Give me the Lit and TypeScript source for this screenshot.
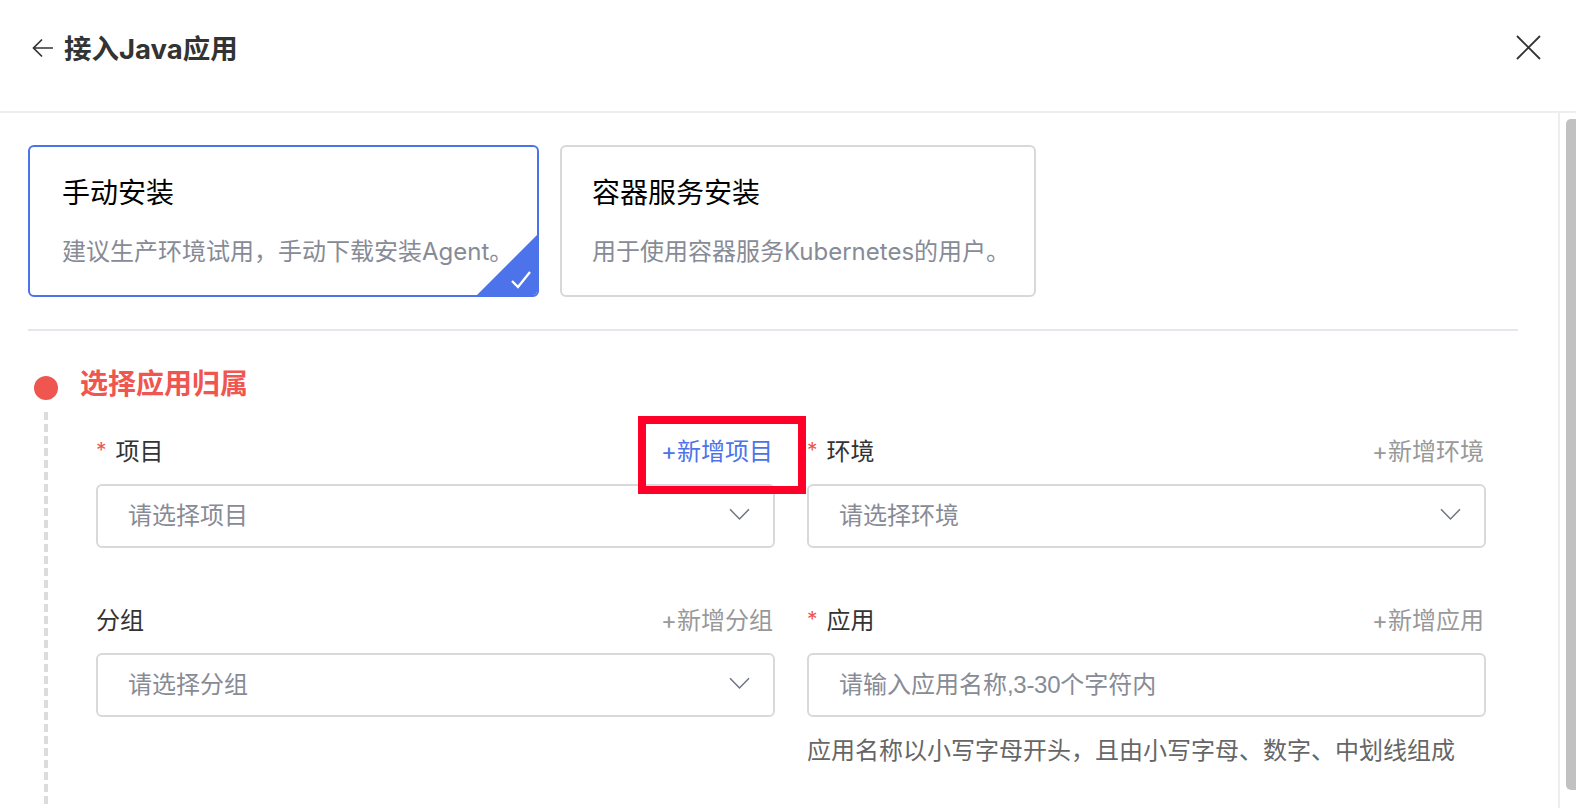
import { LitElement, html, css } from "lit";
import { customElement } from "lit/decorators.js";

const chevron = html`<svg class="chev" width="21" height="13" viewBox="0 0 21 13" fill="none"><path d="M1 1.2 10.5 11 20 1.2" stroke="#6f7480" stroke-width="1.5"/></svg>`;

@customElement("app-root")
export class AppRoot extends LitElement {
  static styles = css`
    :host { display: block; width: 1576px; height: 808px; overflow: hidden; background: #fff; position: relative;
      font-family: Inter, "Noto Sans CJK SC", sans-serif; font-size: 24px; color: #333; }
    .header { height: 96px; border-bottom: 2px solid #eeeef0; display: flex; align-items: center; padding: 0 35px 15px 32px; box-sizing: content-box; }
    .back { flex: none; display: block; margin-right: 11px; }
    .title { font-size: 27.5px; font-weight: 700; color: #333; line-height: 34px; flex: 1; position: relative; top: 1px; }
    .close { position: relative; top: -1px; }
    .body { display: flex; height: 695px; }
    .main { flex: 1; padding: 32px 40px 0 28px; min-width: 0; }
    .track { width: 16px; border-left: 2px solid #eeeef0; padding: 6px 0 18px; flex: none; display: flex; justify-content: flex-end; }
    .thumb { width: 10px; background: #c1c1c1; border-radius: 5px 0 0 5px; margin-left: 6px; flex: none; height: 671px; }
    .cards { display: flex; gap: 21px; }
    .card { height: 152px; box-sizing: border-box; border: 2px solid #d8d8da; border-radius: 6px; padding: 0 31px 0 30px; position: relative; overflow: hidden; }
    .card.a { width: 511px; border-color: #4c73ea; padding-left: 32px; }
    .card.b { width: 476px; }
    .card h3 { margin: 27px 0 0; font-size: 28px; font-weight: 400; line-height: 38px; color: #000; }
    .card p { margin: 20px 0 0; font-size: 24px; line-height: 40px; color: #878b96; white-space: nowrap; }
    .corner { position: absolute; right: -2px; bottom: -2px; display: block; }
    .divider { height: 2px; background: #e4e5ef; margin-top: 32px; }
    .heading { display: flex; align-items: center; margin-top: 39px; height: 32px; }
    .dot { width: 24px; height: 24px; border-radius: 50%; background: #f05650; margin-left: 6px; flex: none; position: relative; top: 2px; }
    .heading span { margin-left: 22px; font-size: 28px; font-weight: 700; line-height: 32px; color: #f05650; position: relative; top: -2.5px; }
    .timeline { display: flex; margin-top: 10px; }
    .line { width: 4px; height: 394px; margin-left: 16px; flex: none; background: repeating-linear-gradient(to bottom, #dcdcdc 0 8px, transparent 8px 12px); }
    .form { flex: 1; padding: 20px 32px 0 48px; display: grid; grid-template-columns: 679px 679px; column-gap: 32px; row-gap: 53px; align-content: start; }
    .labelrow { display: flex; align-items: center; justify-content: space-between; height: 40px; margin-bottom: 12px; }
    .label { display: flex; align-items: center; line-height: 40px; }
    .req { color: #f05650; font-size: 21px; width: 19.5px; position: relative; top: -1px; }
    .add { color: #999; line-height: 40px; margin-right: 2px; }
    .add.on { color: #4c73ea; }
    .input { height: 64px; box-sizing: border-box; border: 2px solid #d9d9db; border-radius: 6px; padding: 0 23px 0 30px; display: flex; align-items: center; justify-content: space-between; color: #878b96; }
    .input span { position: relative; top: -2.5px; }
    .input .chev { position: relative; top: -1.5px; }
    .help { margin-top: 14px; line-height: 40px; color: #666; white-space: nowrap; }
    .nums { font-family: "Liberation Sans", "Noto Sans CJK SC", sans-serif; letter-spacing: -0.3px; top: 0 !important; }
    .highlight { position: absolute; left: 638px; top: 416px; width: 168px; height: 78px; box-sizing: border-box; border: 8px solid #ff0029; }
  `;

  field(label: string, add: string, ph: unknown, req: boolean, on = false, select = true, help = "") {
    return html`<div class="field">
      <div class="labelrow">
        <div class="label">${req ? html`<span class="req">*</span>` : ""}${label}</div>
        <div class="add ${on ? "on" : ""}">${add}</div>
      </div>
      <div class="input"><span>${ph}</span>${select ? chevron : ""}</div>
      ${help ? html`<div class="help">${help}</div>` : ""}
    </div>`;
  }

  render() {
    return html`
      <div class="header">
        <svg class="back" width="21" height="20" viewBox="0 0 21 20" fill="none"><path d="M21 10H1.5M10 1.5 1.5 10l8.5 8.5" stroke="#333" stroke-width="1.7"/></svg>
        <div class="title">接入Java应用</div>
        <svg class="close" width="25" height="25" viewBox="0 0 25 25" fill="none"><path d="M1 1l23 23M24 1 1 24" stroke="#333" stroke-width="1.8"/></svg>
      </div>
      <div class="body">
        <div class="main">
          <div class="cards">
            <div class="card a">
              <h3>手动安装</h3>
              <p>建议生产环境试用，手动下载安装Agent。</p>
              <svg class="corner" width="64" height="64" viewBox="0 0 64 64"><path d="M64 0V64H0Z" fill="#4c73ea"/><path d="M37 48l6 6 12-15" fill="none" stroke="#fff" stroke-width="2.4"/></svg>
            </div>
            <div class="card b">
              <h3>容器服务安装</h3>
              <p>用于使用容器服务Kubernetes的用户。</p>
            </div>
          </div>
          <div class="divider"></div>
          <div class="heading"><div class="dot"></div><span>选择应用归属</span></div>
          <div class="timeline">
            <div class="line"></div>
            <div class="form">
              ${this.field("项目", "+新增项目", "请选择项目", true, true)}
              ${this.field("环境", "+新增环境", "请选择环境", true)}
              ${this.field("分组", "+新增分组", "请选择分组", false)}
              ${this.field("应用", "+新增应用", html`请输入应用名称<span class="nums">,3-30</span>个字符内`, true, false, false, "应用名称以小写字母开头，且由小写字母、数字、中划线组成")}
            </div>
          </div>
        </div>
        <div class="track"><div class="thumb"></div></div>
      </div>
      <div class="highlight"></div>
    `;
  }
}
